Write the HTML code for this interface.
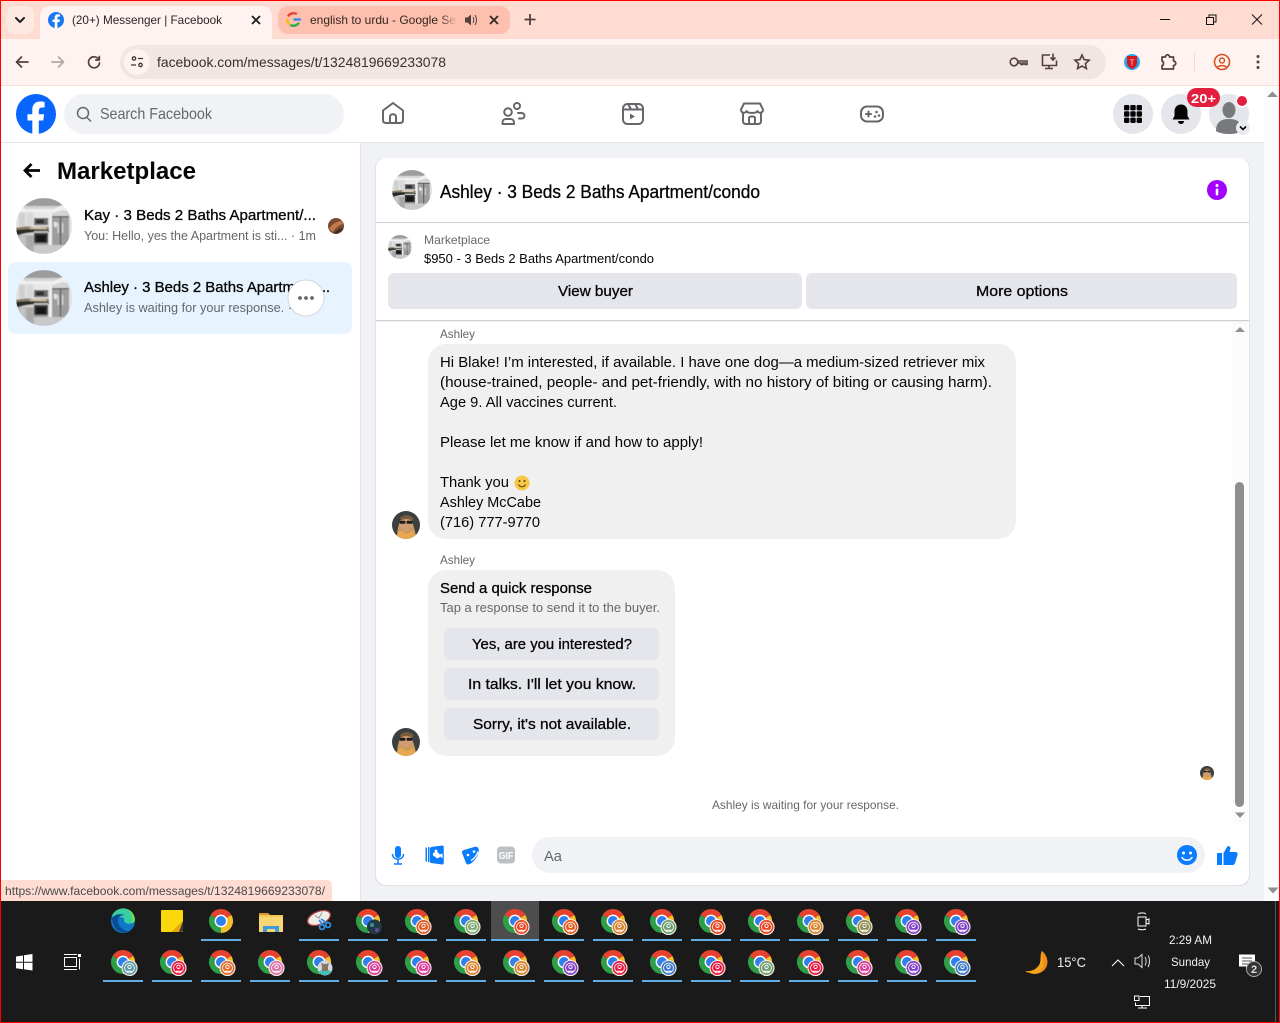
<!DOCTYPE html>
<html lang="en"><head><meta charset="utf-8"><title>Messenger | Facebook</title>
<style>
html,body{margin:0;padding:0;background:#fff;width:1280px;height:1023px;overflow:hidden}
svg{display:block}
text{font-family:"Liberation Sans",Arial,sans-serif;font-size:15px;fill:#050505;white-space:pre}
.m{stroke:#050505;stroke-width:.3}
.g{fill:#65676b}
.s12{font-size:12px}.s13{font-size:13px}.s14{font-size:14px}
.w{fill:#fff}
.ic{fill:none;stroke:#65676b;stroke-width:2;stroke-linecap:round;stroke-linejoin:round}
.tb{fill:none;stroke:#fff;stroke-width:1}
.ch{fill:none;stroke:#54403c;stroke-width:1.7;stroke-linecap:round;stroke-linejoin:round}
</style></head><body>
<svg width="1280" height="1023" viewBox="0 0 1280 1023" xmlns="http://www.w3.org/2000/svg">
<defs>
<clipPath id="cc"><circle cx="28" cy="28" r="28"/></clipPath>
<clipPath id="fc"><circle cx="14" cy="14" r="14"/></clipPath>
<filter id="soft" x="-5%" y="-5%" width="110%" height="110%"><feGaussianBlur stdDeviation=".45"/></filter>
<linearGradient id="fade" x1="0" x2="1"><stop offset="0" stop-color="#fec0ae" stop-opacity="0"/><stop offset="1" stop-color="#fec0ae"/></linearGradient>
<symbol id="kitchen" viewBox="0 0 56 56">
<g clip-path="url(#cc)"><g filter="url(#soft)">
<rect width="56" height="56" fill="#d4d4d4"/>
<rect width="56" height="8" fill="#9c9c9c"/>
<path d="M0 7L10 11H38L48 6L56 8V14L46 12L38 15H12L0 13Z" fill="#efefef"/>
<rect x="0" y="14" width="18" height="15" fill="#e2e2e2"/>
<rect x="3" y="15" width="6" height="13" fill="#cfcfcf"/>
<rect x="11" y="15" width="6" height="13" fill="#d8d8d8"/>
<rect x="18" y="14" width="15" height="6" fill="#e8e8e8"/>
<rect x="18" y="20" width="14" height="7" fill="#6a6a6a"/>
<rect x="20" y="21.500" width="8" height="4" fill="#2e2e2e"/>
<rect x="33" y="14" width="3" height="33" fill="#eee"/>
<rect x="36" y="18" width="17" height="29" fill="#9d9d9d"/>
<rect x="36" y="18" width="17" height="1.500" fill="#666"/>
<rect x="44" y="19" width="1" height="28" fill="#3e3e3e"/>
<rect x="41.500" y="25" width="1.200" height="10" fill="#e0e0e0"/><rect x="46" y="25" width="1.200" height="10" fill="#e0e0e0"/>
<rect x="38" y="24" width="3" height="5" fill="#e8e8e8"/>
<path d="M0 30C8 28 14 28 18 29.500L33 29V32C24 31.500 10 32 0 36Z" fill="#8d7f6a"/>
<path d="M0 32C8 31 18 31 33 32V34.500C24 33.500 10 34 0 38Z" fill="#2c2a28"/>
<path d="M14 29.500H30V31H14Z" fill="#d8c8a8"/>
<rect x="0" y="37" width="18" height="19" fill="#b4b4b4"/>
<rect x="4" y="38" width="5" height="18" fill="#c4c4c4"/><rect x="11" y="38" width="6" height="18" fill="#a8a8a8"/>
<rect x="18" y="33" width="14" height="14" fill="#3a3a3a"/>
<rect x="18" y="33" width="14" height="2" fill="#bdbdbd"/>
<rect x="20" y="37" width="10" height="7" fill="#191919"/>
<rect x="18" y="45" width="14" height="2" fill="#9a9a9a"/>
<rect x="18" y="47" width="38" height="9" fill="#c9c9c9"/>
<rect x="53" y="14" width="3" height="34" fill="#e0e0e0"/>
</g></g>
</symbol>
<symbol id="face" viewBox="0 0 28 28">
<g clip-path="url(#fc)">
<rect width="28" height="28" fill="#3a3f42"/>
<path d="M5 28C5 20 6 15 8 11C11 5 18 5 20 11C22 16 24 22 24 28Z" fill="#c89a5c"/>
<ellipse cx="14" cy="13" rx="6.500" ry="7" fill="#d09c74"/>
<rect x="7.500" y="9.800" width="6" height="3" rx="1.400" fill="#1c1c1c"/>
<rect x="14.500" y="9.800" width="6" height="3" rx="1.400" fill="#1c1c1c"/>
<path d="M3 28C6 21 9 18 11 21C14 24 17 23 20 20C22 20 24 24 26 28Z" fill="#e8a850"/>
<path d="M8 7C12 3 18 3 22 8L20 9.500C16 7.500 12 7.500 9 9.500Z" fill="#7a5c3c"/>
</g>
</symbol>
<symbol id="chrome" viewBox="-13 -13 36 36" overflow="visible">
<path d="M0 0L-10.400-6A12 12 0 0 1 10.400-6Z" fill="#e5432f"/>
<path d="M0 0L10.400-6A12 12 0 0 1 0 12Z" fill="#f6bf2a"/>
<path d="M0 0L0 12A12 12 0 0 1-10.400-6Z" fill="#2f9e48"/>
<circle r="6.400" fill="#fff"/><circle r="5" fill="#2f80ed"/>
</symbol>
<symbol id="badge" viewBox="-9 -9 18 18" overflow="visible">
<circle r="7.500" fill="currentColor" stroke="#f6ece6" stroke-width="1.100"/>
<circle r="4.900" fill="none" stroke="#fff" stroke-width=".8"/>
<circle cy="-1.200" r="1.700" fill="none" stroke="#fff" stroke-width=".9"/>
<path d="M-3 3.300H3" stroke="#fff" stroke-width="1.100"/>
</symbol>
</defs>

<!-- browser chrome -->
<rect width="1280" height="1023" fill="#fff"/>
<rect width="1280" height="39" fill="#fedcd1"/>
<rect y="39" width="1280" height="46" fill="#fef3f0"/>
<rect y="85" width="1280" height="1" fill="#f9dfd6"/>
<rect x="6" y="6" width="28" height="28" rx="8" fill="#fee9e2"/>
<path d="M16 18l4 4 4-4" fill="none" stroke="#1f1f1f" stroke-width="2" stroke-linecap="round" stroke-linejoin="round"/>
<path d="M40 39C40 39 40 34 40 16C40 10 44 6 50 6H262C268 6 272 10 272 16V39Z" fill="#fef3f0"/>
<circle cx="56" cy="20" r="8" fill="#1877f2"/>
<path d="M57.400 28V22H59.500L59.900 19.500H57.400V18C57.400 17.200 57.800 16.600 58.900 16.600H60V14.500C59.300 14.400 58.700 14.300 58 14.300C56 14.300 54.700 15.500 54.700 17.700V19.500H52.500V22H54.700V28Z" fill="#fff"/>
<text x="72" y="24" class="s12" textLength="150" lengthAdjust="spacingAndGlyphs" style="fill:#2a2523">(20+) Messenger | Facebook</text>
<path d="M252 16l8 8M260 16l-8 8" stroke="#1f1f1f" stroke-width="1.800"/>
<rect x="278" y="6" width="232" height="28" rx="10" fill="#fec0ae"/>
<circle cx="293.500" cy="19.500" r="6.300" fill="none" stroke="#ea4335" stroke-width="2.400" stroke-dasharray="10 30" transform="rotate(-150 293.500 19.500)"/>
<circle cx="293.500" cy="19.500" r="6.300" fill="none" stroke="#34a853" stroke-width="2.400" stroke-dasharray="10 30" transform="rotate(30 293.500 19.500)"/>
<circle cx="293.500" cy="19.500" r="6.300" fill="none" stroke="#fbbc05" stroke-width="2.400" stroke-dasharray="6 34" transform="rotate(130 293.500 19.500)"/>
<path d="M293.500 18.300H301V20.700H293.500Z" fill="#4285f4"/>
<text x="310" y="24" class="s12" textLength="146" lengthAdjust="spacingAndGlyphs" style="fill:#33261f">english to urdu - Google Se</text>
<rect x="440" y="10" width="17" height="20" fill="url(#fade)"/>
<path d="M465 17.500h2.500l3.500-3v11l-3.500-3H465Z" fill="#54403c"/>
<path d="M473 17c1 1.500 1 4.500 0 6M475 15c2 3 2 7 0 10" fill="none" stroke="#54403c" stroke-width="1"/>
<path d="M490 16l8 8M498 16l-8 8" stroke="#33261f" stroke-width="1.800"/>
<path d="M530 14v11M524.500 19.500h11" stroke="#54403c" stroke-width="1.800"/>
<path d="M1160 19.500h10" stroke="#111" stroke-width="1"/>
<path d="M1206.500 17.500h7v7h-7zM1209 17.500v-2.500h7v7h-2.500" fill="none" stroke="#111" stroke-width="1"/>
<path d="M1252 14.500l10 10M1262 14.500l-10 10" stroke="#111" stroke-width="1"/>

<!-- toolbar -->
<path class="ch" d="M28 62H17M21.500 57L16.500 62 21.500 67"/>
<path class="ch" style="stroke:#b5a6a2" d="M52 62H63M58.500 57L63.500 62 58.500 67"/>
<path class="ch" d="M98.800 59.500A5.500 5.500 0 1 0 99.500 63M99.300 56.500V60H95.800"/>
<rect x="120" y="45" width="986" height="34" rx="17" fill="#f1e6e4"/>
<circle cx="137" cy="62" r="13" fill="#fef3f0"/>
<g fill="none" stroke="#3f3230" stroke-width="1.300"><circle cx="134" cy="58.500" r="1.700"/><path d="M138 58.500h5M131 65h5"/><circle cx="140.500" cy="65" r="1.700"/></g>
<text x="157" y="67" class="s14" textLength="289" lengthAdjust="spacingAndGlyphs" style="fill:#3a2f2d">facebook.com/messages/t/1324819669233078</text>
<g fill="none" stroke="#54403c" stroke-width="1.600">
<circle cx="1014" cy="62" r="3.800"/><path d="M1018 61h9v3.500h-2v-1.500h-2v1.500h-2v-1.500h-3"/>
<path d="M1050 55h-7.500v10.500h14v-5M1045 68.500h8M1049 65.500v3M1053 53.500v6M1050.500 57.500l2.500 2.500 2.500-2.500"/>
<path d="M1082 55l2.100 4.600 5 .6-3.700 3.400 1 5-4.400-2.500-4.400 2.500 1-5-3.700-3.400 5-.6Z"/>
</g>
<circle cx="1132" cy="62" r="8" fill="#2aa6f0"/>
<path d="M1127 56h10v7c0 3-3 5-5 6-2-1-5-3-5-6Z" fill="#d4181f"/>
<text x="1129.500" y="65.500" style="font-size:8px;fill:#ffd0c8">T</text>
<path class="ch" d="M1162 57h3.500c0-3 4-3 4 0h4v4c3 0 3 4.500 0 4.500v3.500h-11.500v-3.500c2 0 2-4 0-4.500z"/>
<rect x="1194" y="53" width="1" height="18" fill="#f9d4c8"/>
<circle cx="1222" cy="62" r="7.500" fill="none" stroke="#d8501e" stroke-width="1.600"/>
<circle cx="1222" cy="60.500" r="2.500" fill="none" stroke="#d8501e" stroke-width="1.500"/>
<path d="M1217.500 67.500c1.500-2.500 7.500-2.500 9 0" fill="none" stroke="#d8501e" stroke-width="1.500"/>
<g fill="#54403c"><circle cx="1258" cy="56.500" r="1.500"/><circle cx="1258" cy="62" r="1.500"/><circle cx="1258" cy="67.500" r="1.500"/></g>

<!-- page background -->
<rect x="361" y="142" width="903" height="759" fill="#f0f2f5"/>
<rect x="360" y="142" width="1" height="759" fill="#e4e6eb"/>
<rect x="1" y="142" width="1263" height="1" fill="#e4e6eb"/>
<rect x="1264" y="86" width="15" height="815" fill="#fcfcfc"/>
<path d="M1267 97h11l-5.500-5.500z" fill="#909090"/>
<path d="M1267.500 887.500h11l-5.500 6z" fill="#909090"/>

<!-- FB nav -->
<circle cx="36" cy="114" r="20" fill="#0866ff"/>
<path d="M38.800 134V120.500H43.300L44.100 114.300H38.800V111C38.800 108.800 39.800 107.500 42.300 107.500H44.600V101.900C43.400 101.700 41.800 101.500 40.200 101.500C35.500 101.500 32.300 104.300 32.300 109.700V114.300H27.500V120.500H32.300V134Z" fill="#fff"/>
<rect x="64" y="94" width="280" height="40" rx="20" fill="#f0f2f5"/>
<circle cx="83" cy="113" r="5.500" fill="none" stroke="#65676b" stroke-width="1.500"/><path d="M87 117.500l4 4" stroke="#65676b" stroke-width="1.500"/>
<text x="100" y="119" textLength="112" lengthAdjust="spacingAndGlyphs" style="font-size:16px" class="g">Search Facebook</text>
<path class="ic" d="M383 110.500L393 103 403 110.500V120C403 122 402 123 400 123H386C384 123 383 122 383 120ZM390 123V116.500C390 113.500 396 113.500 396 116.500V123"/>
<g class="ic"><circle cx="517" cy="106" r="3"/><circle cx="508" cy="112" r="3.800"/><path d="M502.500 124v-1.500c0-2 1.500-3.500 3.500-3.500h4.500c2 0 3.500 1.500 3.500 3.500v1.500zM518 113h3.500c1.800 0 3 1.200 3 2.800s-1.200 2.700-3 2.700h-2.500"/></g>
<g class="ic"><rect x="623" y="104" width="20" height="20" rx="4.500"/><path d="M623 109.500h20M628.500 104.500l2.500 5M635.500 104.500l2.500 5"/></g>
<path d="M630 113.500v6l5-3z" fill="#65676b"/>
<g class="ic"><path d="M744 103.500h16l3 6c0 4-5 4-5.500 1.500-.5 2.500-10.500 2.500-11 0-.5 2.500-5.500 2.500-5.500-1.500z"/><path d="M743 113v8c0 2 1 3 3 3h12c2 0 3-1 3-3v-8M749 124v-6c0-2 6-2 6 0v6"/></g>
<g class="ic"><rect x="861" y="106.500" width="22" height="15" rx="6"/><path d="M866 114h5M868.500 111.500v5"/></g>
<circle cx="876.500" cy="112" r="1.300" fill="#65676b"/><circle cx="879" cy="115.500" r="1.300" fill="#65676b"/><circle cx="875" cy="116.500" r="1.300" fill="#65676b"/>

<circle cx="1133" cy="114" r="20" fill="#e4e6eb"/>
<g fill="#050505"><rect x="1124" y="105" width="5.400" height="5.400" rx="1.200"/><rect x="1130.300" y="105" width="5.400" height="5.400" rx="1.200"/><rect x="1136.600" y="105" width="5.400" height="5.400" rx="1.200"/><rect x="1124" y="111.300" width="5.400" height="5.400" rx="1.200"/><rect x="1130.300" y="111.300" width="5.400" height="5.400" rx="1.200"/><rect x="1136.600" y="111.300" width="5.400" height="5.400" rx="1.200"/><rect x="1124" y="117.600" width="5.400" height="5.400" rx="1.200"/><rect x="1130.300" y="117.600" width="5.400" height="5.400" rx="1.200"/><rect x="1136.600" y="117.600" width="5.400" height="5.400" rx="1.200"/></g>
<circle cx="1181" cy="114" r="20" fill="#e4e6eb"/>
<path d="M1181 104.500c-4.500 0-6.500 3.500-6.500 7v4.500l-2 3.500h17l-2-3.500v-4.500c0-3.500-2-7-6.500-7zM1178 121c0 4 6 4 6 0z" fill="#050505"/>
<circle cx="1229" cy="114" r="20" fill="#e4e6eb"/>
<ellipse cx="1229" cy="110" rx="6.500" ry="8" fill="#77797d"/>
<path d="M1216 131c0-9 5-12 13-12s13 3 13 12c-6 4-20 4-26 0z" fill="#77797d"/>
<circle cx="1229" cy="114" r="20" fill="none" stroke="#e4e6eb" stroke-width="0"/>
<rect x="1187" y="88" width="33" height="19" rx="9.500" fill="#e41e3f"/>
<text x="1191" y="103" textLength="25" lengthAdjust="spacingAndGlyphs" class="s13 w" style="font-weight:bold;fill:#fff">20+</text>
<circle cx="1242" cy="101" r="6.500" fill="#fff"/><circle cx="1242" cy="101" r="5" fill="#e41e3f"/>
<circle cx="1243" cy="128" r="7" fill="#e9ebee"/><path d="M1240 126.500l3 3 3-3" fill="none" stroke="#050505" stroke-width="1.600"/>

<!-- sidebar -->
<path d="M40 170.500H25M31.500 164L25 170.500 31.500 177" fill="none" stroke="#050505" stroke-width="2.800"/>
<text x="57" y="179" textLength="139" lengthAdjust="spacingAndGlyphs" style="font-size:24px;font-weight:bold">Marketplace</text>
<use href="#kitchen" x="16" y="198" width="56" height="56"/>
<text x="84" y="220" class="m" textLength="232" lengthAdjust="spacingAndGlyphs">Kay · 3 Beds 2 Baths Apartment/...</text>
<text x="84" y="240" class="s13 g" textLength="232" lengthAdjust="spacingAndGlyphs">You: Hello, yes the Apartment is sti... · 1m</text>
<circle cx="336" cy="226" r="8" fill="#7a4a32"/><path d="M329 229c3-5 8-8 13-8l1 3c-4 1-8 4-10 8z" fill="#c07a50"/><path d="M334 233c3-3 5-4 9-5l-1 2c-2 2-4 3-6 4z" fill="#3a2a22"/>
<rect x="8" y="262" width="344" height="72" rx="8" fill="#e7f3ff"/>
<use href="#kitchen" x="16" y="270" width="56" height="56"/>
<text x="84" y="292" class="m" textLength="211" lengthAdjust="spacingAndGlyphs">Ashley · 3 Beds 2 Baths Apartm</text>
<text x="322" y="292" class="m" textLength="8" lengthAdjust="spacingAndGlyphs">..</text>
<text x="84" y="312" class="s13 g" textLength="208" lengthAdjust="spacingAndGlyphs">Ashley is waiting for your response. ·</text>
<circle cx="306" cy="298" r="18" fill="#fff" stroke="#d4d6da" stroke-width="1"/>
<circle cx="300" cy="298" r="1.900" fill="#65676b"/><circle cx="306" cy="298" r="1.900" fill="#65676b"/><circle cx="312" cy="298" r="1.900" fill="#65676b"/>

<!-- main card -->
<rect x="375" y="158" width="875" height="728" rx="10" fill="#dfe1e5"/>
<rect x="376" y="158" width="873" height="727" rx="10" fill="#fff"/>
<use href="#kitchen" x="392" y="170" width="40" height="40"/>
<text x="440" y="198" class="m" textLength="320" lengthAdjust="spacingAndGlyphs" style="font-size:18px">Ashley · 3 Beds 2 Baths Apartment/condo</text>
<circle cx="1217" cy="190" r="10" fill="#a200ff"/>
<circle cx="1217" cy="185.500" r="1.500" fill="#fff"/><rect x="1215.700" y="188.500" width="2.600" height="7" rx="1" fill="#fff"/>
<rect x="376" y="222" width="873" height="1" fill="#ced0d4"/>
<use href="#kitchen" x="388" y="235" width="24" height="24"/>
<text x="424" y="244" class="s12 g" textLength="66" lengthAdjust="spacingAndGlyphs">Marketplace</text>
<text x="424" y="263" class="s13" textLength="230" lengthAdjust="spacingAndGlyphs">$950 - 3 Beds 2 Baths Apartment/condo</text>
<rect x="388" y="273" width="414" height="36" rx="6" fill="#e4e6eb"/>
<rect x="806" y="273" width="431" height="36" rx="6" fill="#e4e6eb"/>
<text x="558" y="296" class="m" textLength="75" lengthAdjust="spacingAndGlyphs">View buyer</text>
<text x="976" y="296" class="m" textLength="92" lengthAdjust="spacingAndGlyphs">More options</text>
<rect x="376" y="320" width="873" height="1" fill="#ced0d4"/>
<rect x="376" y="321" width="873" height="1" fill="#eef0f2"/>

<!-- messages -->
<text x="440" y="338" class="s12 g" textLength="35" lengthAdjust="spacingAndGlyphs">Ashley</text>
<rect x="428" y="344" width="588" height="195" rx="18" fill="#f0f0f0"/>
<text x="440" y="367" textLength="545" lengthAdjust="spacingAndGlyphs">Hi Blake! I’m interested, if available. I have one dog—a medium-sized retriever mix</text>
<text x="440" y="387" textLength="552" lengthAdjust="spacingAndGlyphs">(house-trained, people- and pet-friendly, with no history of biting or causing harm).</text>
<text x="440" y="407" textLength="177" lengthAdjust="spacingAndGlyphs">Age 9. All vaccines current.</text>
<text x="440" y="447" textLength="263" lengthAdjust="spacingAndGlyphs">Please let me know if and how to apply!</text>
<text x="440" y="487" textLength="69" lengthAdjust="spacingAndGlyphs">Thank you</text>
<circle cx="522" cy="483" r="7.500" fill="#f6c644"/>
<circle cx="519.500" cy="481" r="1" fill="#5a3a10"/><circle cx="524.500" cy="481" r="1" fill="#5a3a10"/>
<path d="M518.500 484.500c1.500 3 5.500 3 7 0" fill="none" stroke="#5a3a10" stroke-width="1"/>
<text x="440" y="507" textLength="101" lengthAdjust="spacingAndGlyphs">Ashley McCabe</text>
<text x="440" y="527" textLength="100" lengthAdjust="spacingAndGlyphs">(716) 777-9770</text>
<use href="#face" x="392" y="511" width="28" height="28"/>
<text x="440" y="564" class="s12 g" textLength="35" lengthAdjust="spacingAndGlyphs">Ashley</text>
<rect x="428" y="570" width="247" height="186" rx="18" fill="#f0f0f0"/>
<text x="440" y="593" class="m" textLength="152" lengthAdjust="spacingAndGlyphs">Send a quick response</text>
<text x="440" y="612" class="s13 g" textLength="220" lengthAdjust="spacingAndGlyphs">Tap a response to send it to the buyer.</text>
<rect x="444" y="628" width="215" height="32" rx="6" fill="#e4e6eb"/>
<rect x="444" y="668" width="215" height="32" rx="6" fill="#e4e6eb"/>
<rect x="444" y="708" width="215" height="32" rx="6" fill="#e4e6eb"/>
<text x="472" y="649" class="m" textLength="160" lengthAdjust="spacingAndGlyphs">Yes, are you interested?</text>
<text x="468" y="689" class="m" textLength="168" lengthAdjust="spacingAndGlyphs">In talks. I'll let you know.</text>
<text x="473" y="729" class="m" textLength="158" lengthAdjust="spacingAndGlyphs">Sorry, it's not available.</text>
<use href="#face" x="392" y="728" width="28" height="28"/>
<use href="#face" x="1200" y="766" width="14" height="14"/>
<text x="712" y="809" class="s12 g" textLength="187" lengthAdjust="spacingAndGlyphs">Ashley is waiting for your response.</text>
<!-- inner scrollbar -->
<rect x="1232" y="322" width="16" height="502" fill="#fcfcfc"/>
<path d="M1235 332h10l-5-5z" fill="#909090"/>
<rect x="1235" y="482" width="9" height="325" rx="4.500" fill="#8e8e8e"/>
<path d="M1235 812.500h10l-5 5.500z" fill="#909090"/>

<!-- composer -->
<rect x="395" y="846" width="6" height="12" rx="3" fill="#0a7cff"/>
<path d="M392.500 854c0 7 11 7 11 0M398 860v3.500M394 864h8" fill="none" stroke="#0a7cff" stroke-width="1.500"/>
<path d="M425.500 847.500h1.500v14h-1.500zM428 847h1.500v15H428z" fill="#0a7cff"/>
<path d="M431 847l11-1.500c1-.1 1.800.6 1.800 1.500v16c0 1-.8 1.600-1.800 1.500l-11-1.500c-.6-.1-1-.5-1-1v-13.500c0-.5.400-.9 1-1z" fill="#0a7cff"/>
<path d="M433 853l4-1.500 3 3 2.500-1v5l-2-2-3 2-4.500-3z" fill="#fff"/><circle cx="436" cy="851" r="1.400" fill="#fff"/>
<path d="M464 850l11-3.200c1.500-.4 3 .3 3.500 1.800l.5 2.400c-1 5-4 10-9 13l-1.500.4c-1.200.3-2.300-.3-2.600-1.500l-3.800-9.900c-.4-1.300.400-2.600 1.900-3z" fill="#0a7cff"/>
<path d="M471 860.500c3-1.500 6-5 7-9" fill="none" stroke="#fff" stroke-width="1.400"/><circle cx="468" cy="855" r="1.300" fill="#fff"/><circle cx="474" cy="851.500" r="1.300" fill="#fff"/>
<rect x="497" y="846.500" width="18" height="17" rx="4" fill="#bcc0c4"/>
<text x="498.800" y="858.800" textLength="14.500" lengthAdjust="spacingAndGlyphs" style="font-size:10px;font-weight:bold;fill:#fff">GIF</text>
<rect x="532" y="837" width="673" height="36" rx="18" fill="#f0f2f5"/>
<text x="544" y="861" class="g" textLength="18" lengthAdjust="spacingAndGlyphs">Aa</text>
<circle cx="1187" cy="855" r="10" fill="#0a7cff"/>
<circle cx="1183.500" cy="853" r="1.500" fill="#fff"/><circle cx="1190.500" cy="853" r="1.500" fill="#fff"/>
<path d="M1182 857.500c2 3.500 8 3.500 10 0" fill="none" stroke="#fff" stroke-width="1.500" stroke-linecap="round"/>
<path d="M1217 853h5v12h-5zM1223.500 853l3.500-6c.6-1.500 3.500-1 3.500 1.500l-1 3.500h6c1.500 0 2.500 1.700 2 3l-2.500 8c-.3 1-1 2-2.500 2h-9z" fill="#0a7cff"/>

<!-- status tooltip -->
<path d="M1 880H326C330 880 332 882 332 886V901H1Z" fill="#fedcd1"/>
<text x="5" y="895" class="s12" textLength="320" lengthAdjust="spacingAndGlyphs" style="fill:#4a4a4a">https://www.facebook.com/messages/t/1324819669233078/</text>

<!-- taskbar -->
<rect y="901" width="1280" height="122" fill="#1a1a1a"/>
<rect x="491" y="901" width="48" height="39" fill="#4d4d4d"/>
<g fill="#fff"><path d="M16 956.500l7-1v6.300h-7zM24 955.300l8.500-1.300v7.800H24zM16 962.800h7v6.400l-7-1zM24 962.800h8.500v7.700l-8.500-1.200z"/></g>
<path class="tb" d="M64.500 957.500h12v9h-12zM64 954.500h13M64 969.500h13M79.500 958.500v11"/><rect x="78" y="954" width="3" height="3" fill="#fff"/>

<!-- first row pinned -->
<circle cx="123" cy="921" r="12" fill="#0f78c8"/>
<path d="M111.500 917c2-7 9-9 13-8.500 6 .5 10 5 10.500 11 .3 3-4 5-8 4-3-1-3.500-3-2.500-5-4-2-9-3-13-1.500z" fill="#38d0a0"/>
<path d="M128 909.500c4 1.500 6.500 5.500 7 10 0 2-2 3.500-4 4 2-4 1-10-3-14z" fill="#6adf50"/>
<path d="M112 918c3-4 9-5 13-2.500-5-1-7 2-7 5 0 5 4 9.500 10 11-7 2.500-15-1-16-13.500z" fill="#0a4d94"/>
<rect x="161" y="910" width="22" height="22" rx="1" fill="#fbd80d"/>
<path d="M172 932l11-11v9c0 1-1 2-2 2z" fill="#3a3a3a"/><path d="M172 932l11-11-4 11z" fill="#e6a80a"/>
<use href="#chrome" x="208" y="908" width="36" height="36"/>
<path d="M259 913h9l2 2h13v17h-24z" fill="#f4c74e"/><path d="M259 913h9l2 2h-11z" fill="#d69a2a"/>
<rect x="259" y="917" width="24" height="15" fill="#f8d673"/>
<path d="M263 932v-6h16v6h-4v-3h-8v3z" fill="#3f9bdc"/>
<g transform="rotate(-22 319 918)"><ellipse cx="319" cy="918" rx="12" ry="6.500" fill="#f0ece8" stroke="#a84040" stroke-width="1.300"/><path d="M316 914l3 4 5-4" stroke="#999" fill="none"/></g>
<g fill="none" stroke="#2f8fe0" stroke-width="1.800"><circle cx="322" cy="927" r="2.400"/><circle cx="328" cy="925" r="2.400"/><path d="M323 925l-4-5M327 923l-6-4"/></g>

<!-- chrome row 1 -->
<use href="#chrome" x="355" y="908" width="36" height="36"/>
<use href="#chrome" x="404" y="908" width="36" height="36"/>
<use href="#chrome" x="453" y="908" width="36" height="36"/>
<use href="#chrome" x="502" y="908" width="36" height="36"/>
<use href="#chrome" x="551" y="908" width="36" height="36"/>
<use href="#chrome" x="600" y="908" width="36" height="36"/>
<use href="#chrome" x="649" y="908" width="36" height="36"/>
<use href="#chrome" x="698" y="908" width="36" height="36"/>
<use href="#chrome" x="747" y="908" width="36" height="36"/>
<use href="#chrome" x="796" y="908" width="36" height="36"/>
<use href="#chrome" x="845" y="908" width="36" height="36"/>
<use href="#chrome" x="894" y="908" width="36" height="36"/>
<use href="#chrome" x="943" y="908" width="36" height="36"/>
<circle cx="374.500" cy="927" r="7.500" fill="#1e3a44"/><circle cx="372" cy="925" r="2" fill="#3d8f9a"/><circle cx="377" cy="930" r="2" fill="#6a4c98"/>
<use href="#badge" x="414.500" y="918" width="18" height="18" style="color:#e05a20"/>
<use href="#badge" x="463.500" y="918" width="18" height="18" style="color:#7fa870"/>
<use href="#badge" x="512.500" y="918" width="18" height="18" style="color:#e8441f"/>
<use href="#badge" x="561.500" y="918" width="18" height="18" style="color:#e85a1a"/>
<use href="#badge" x="610.500" y="918" width="18" height="18" style="color:#d9822b"/>
<use href="#badge" x="659.500" y="918" width="18" height="18" style="color:#6f9e6f"/>
<use href="#badge" x="708.500" y="918" width="18" height="18" style="color:#e8441f"/>
<use href="#badge" x="757.500" y="918" width="18" height="18" style="color:#e8441f"/>
<use href="#badge" x="806.500" y="918" width="18" height="18" style="color:#d9822b"/>
<use href="#badge" x="855.500" y="918" width="18" height="18" style="color:#8f8a50"/>
<use href="#badge" x="904.500" y="918" width="18" height="18" style="color:#8040c8"/>
<use href="#badge" x="953.500" y="918" width="18" height="18" style="color:#8040c8"/>

<!-- chrome row 2 -->
<use href="#chrome" x="110" y="949" width="36" height="36"/>
<use href="#chrome" x="159" y="949" width="36" height="36"/>
<use href="#chrome" x="208" y="949" width="36" height="36"/>
<use href="#chrome" x="257" y="949" width="36" height="36"/>
<use href="#chrome" x="306" y="949" width="36" height="36"/>
<use href="#chrome" x="355" y="949" width="36" height="36"/>
<use href="#chrome" x="404" y="949" width="36" height="36"/>
<use href="#chrome" x="453" y="949" width="36" height="36"/>
<use href="#chrome" x="502" y="949" width="36" height="36"/>
<use href="#chrome" x="551" y="949" width="36" height="36"/>
<use href="#chrome" x="600" y="949" width="36" height="36"/>
<use href="#chrome" x="649" y="949" width="36" height="36"/>
<use href="#chrome" x="698" y="949" width="36" height="36"/>
<use href="#chrome" x="747" y="949" width="36" height="36"/>
<use href="#chrome" x="796" y="949" width="36" height="36"/>
<use href="#chrome" x="845" y="949" width="36" height="36"/>
<use href="#chrome" x="894" y="949" width="36" height="36"/>
<use href="#chrome" x="943" y="949" width="36" height="36"/>
<use href="#badge" x="120.500" y="959" width="18" height="18" style="color:#5a9aa8"/>
<use href="#badge" x="169.500" y="959" width="18" height="18" style="color:#e81840"/>
<use href="#badge" x="218.500" y="959" width="18" height="18" style="color:#e06a2a"/>
<use href="#badge" x="267.500" y="959" width="18" height="18" style="color:#e070a8"/>
<circle cx="325" cy="968" r="7.500" fill="#cfd8e0"/><path d="M318.500 972c2-3 11-3 13 0-2 4-11 4-13 0z" fill="#3fc0b8"/><path d="M322 971v-5l-1-3 3 1h2l3-1-1 3v5z" fill="#8a7560"/>
<use href="#badge" x="365.500" y="959" width="18" height="18" style="color:#d83a98"/>
<use href="#badge" x="414.500" y="959" width="18" height="18" style="color:#d83a98"/>
<use href="#badge" x="463.500" y="959" width="18" height="18" style="color:#d9822b"/>
<use href="#badge" x="512.500" y="959" width="18" height="18" style="color:#d9822b"/>
<use href="#badge" x="561.500" y="959" width="18" height="18" style="color:#8040c8"/>
<use href="#badge" x="610.500" y="959" width="18" height="18" style="color:#e81840"/>
<use href="#badge" x="659.500" y="959" width="18" height="18" style="color:#3a78c8"/>
<use href="#badge" x="708.500" y="959" width="18" height="18" style="color:#e81840"/>
<use href="#badge" x="757.500" y="959" width="18" height="18" style="color:#6f9e6f"/>
<use href="#badge" x="806.500" y="959" width="18" height="18" style="color:#e81840"/>
<use href="#badge" x="855.500" y="959" width="18" height="18" style="color:#d83a98"/>
<use href="#badge" x="904.500" y="959" width="18" height="18" style="color:#8040c8"/>
<use href="#badge" x="953.500" y="959" width="18" height="18" style="color:#3a78c8"/>

<!-- underlines -->
<g fill="#63ade6">
<rect x="201" y="939" width="40" height="2"/><rect x="299" y="939" width="40" height="2"/><rect x="348" y="939" width="40" height="2"/><rect x="397" y="939" width="40" height="2"/><rect x="446" y="939" width="40" height="2"/><rect x="491" y="939" width="48" height="2"/><rect x="544" y="939" width="40" height="2"/><rect x="593" y="939" width="40" height="2"/><rect x="642" y="939" width="40" height="2"/><rect x="691" y="939" width="40" height="2"/><rect x="740" y="939" width="40" height="2"/><rect x="789" y="939" width="40" height="2"/><rect x="838" y="939" width="40" height="2"/><rect x="887" y="939" width="40" height="2"/><rect x="936" y="939" width="40" height="2"/>
<rect x="103" y="980" width="40" height="2"/><rect x="152" y="980" width="40" height="2"/><rect x="201" y="980" width="40" height="2"/><rect x="250" y="980" width="40" height="2"/><rect x="299" y="980" width="40" height="2"/><rect x="348" y="980" width="40" height="2"/><rect x="397" y="980" width="40" height="2"/><rect x="446" y="980" width="40" height="2"/><rect x="495" y="980" width="40" height="2"/><rect x="544" y="980" width="40" height="2"/><rect x="593" y="980" width="40" height="2"/><rect x="642" y="980" width="40" height="2"/><rect x="691" y="980" width="40" height="2"/><rect x="740" y="980" width="40" height="2"/><rect x="789" y="980" width="40" height="2"/><rect x="838" y="980" width="40" height="2"/><rect x="887" y="980" width="40" height="2"/><rect x="936" y="980" width="40" height="2"/>
</g>

<!-- tray -->
<path d="M1042 951c6 5 7 13 3 18-4 5-11 6-15 4-2-.5-4-1-5-2 8 1 13-3 15-8 1-4 0-9 2-12z" fill="#f2a31e"/>
<path d="M1042 951c6 5 7 13 3 18-2 2.500-5 4-8 4.500 4-1.500 6-5 6.500-9 .3-4-1.500-9-1.500-13.500z" fill="#f08a1c"/>
<text x="1057" y="967" class="s14 w" textLength="29" lengthAdjust="spacingAndGlyphs" style="fill:#f0f0f0">15°C</text>
<path d="M1112 966l6-6 6 6" class="tb" stroke-width="1.200"/>
<path class="tb" d="M1135 958h3l4-3.500v13l-4-3.500h-3zM1145 957c1.500 2.500 1.500 6 0 8.500M1148 955.500c2 3 2 8 0 11.500" style="stroke:#ddd"/>
<path class="tb" d="M1138 917h8v9h-8zM1146 920l3-1v5l-3-1M1138 914c2-1.500 6-1.500 8 0M1138 929c2 1 6 1 8 0"/>
<path class="tb" d="M1140 996.500h9.500v9h-14v-3M1142 1005.500v2.500M1138 1008h9"/><rect x="1134.500" y="996" width="4.500" height="4.500" class="tb"/>
<text x="1169" y="944" class="s12 w" textLength="43" lengthAdjust="spacingAndGlyphs" style="fill:#f0f0f0">2:29 AM</text>
<text x="1171" y="966" class="s12 w" textLength="39" lengthAdjust="spacingAndGlyphs" style="fill:#f0f0f0">Sunday</text>
<text x="1164" y="988" class="s12 w" textLength="52" lengthAdjust="spacingAndGlyphs" style="fill:#f0f0f0">11/9/2025</text>
<path d="M1239 954.500h16v12h-6l-3 3v-3h-7z" fill="#fff"/><path d="M1242 958h10M1242 961h10M1242 964h6" stroke="#1a1a1a" stroke-width=".8"/>
<circle cx="1254" cy="969" r="7.500" fill="#333" stroke="#aaa" stroke-width="1"/>
<text x="1251" y="973" style="font-size:11px;font-weight:bold;fill:#ddd">2</text>
<rect x="1275" y="901" width="1" height="121" fill="#555"/>

<!-- window border -->
<rect x=".5" y=".5" width="1279" height="1022" fill="none" stroke="#ff0000" stroke-width="1"/>
</svg>
</body></html>
